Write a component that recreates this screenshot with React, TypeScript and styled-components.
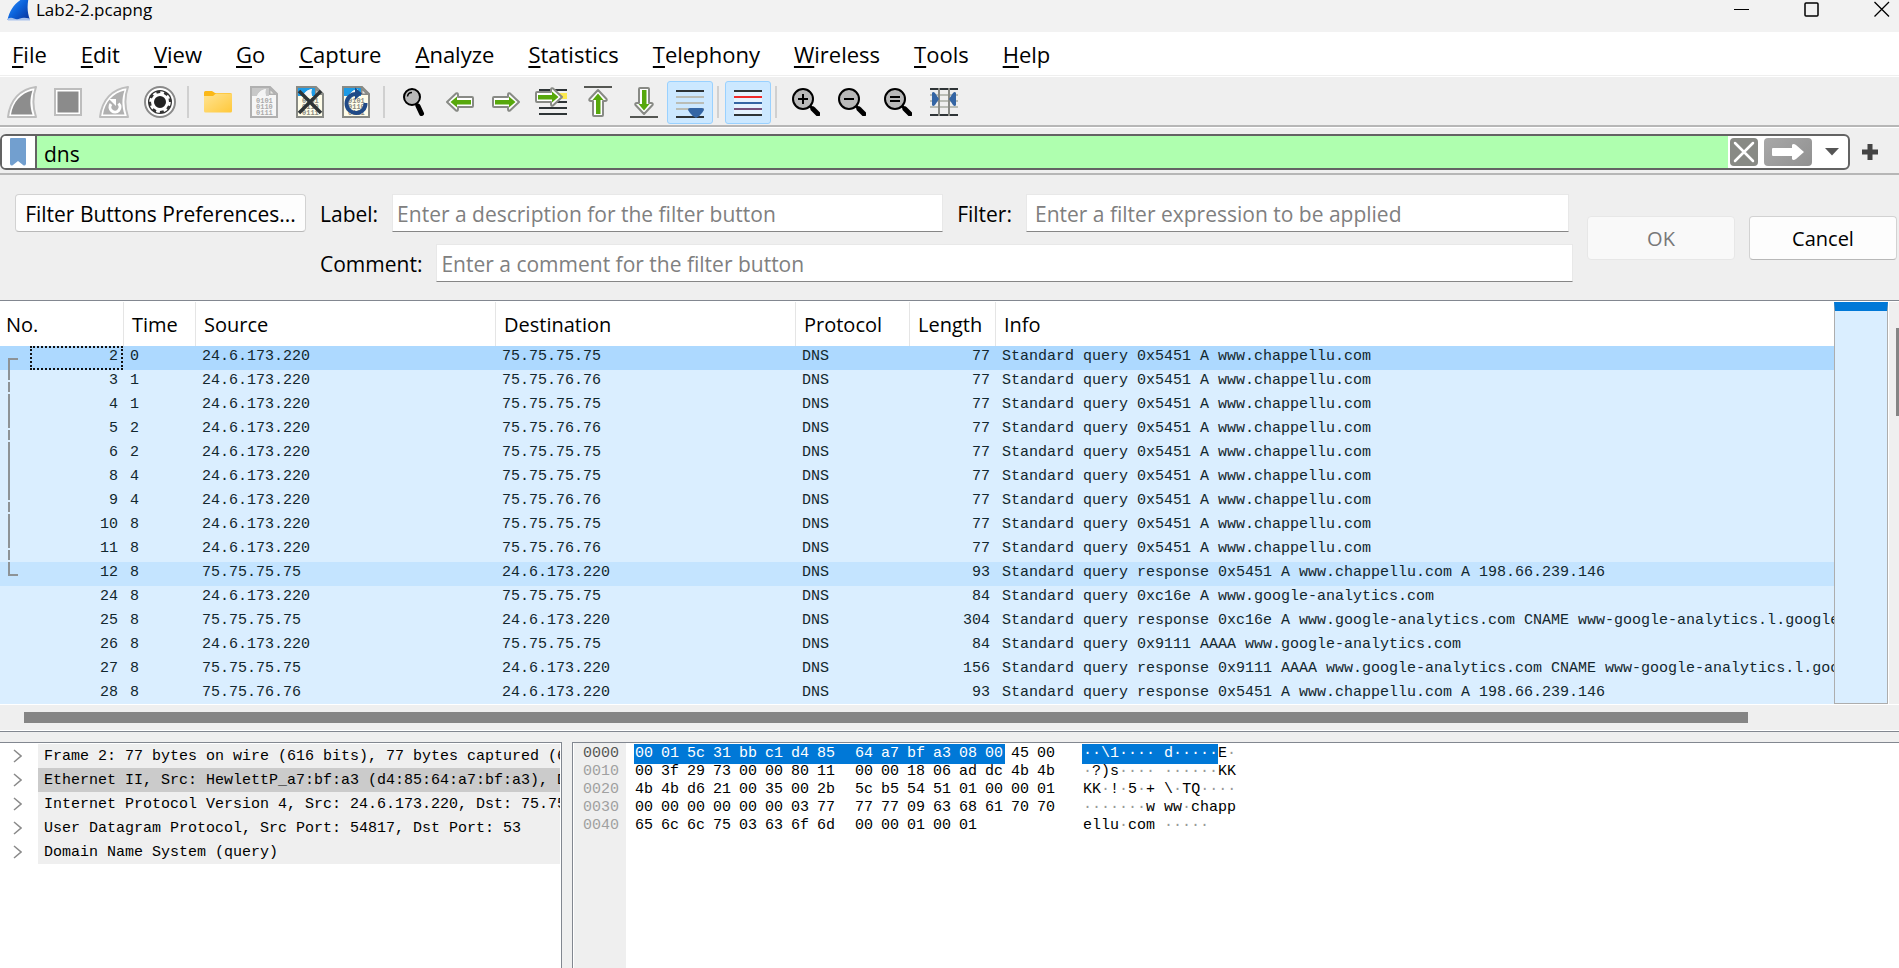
import React from 'react';
import styled, { createGlobalStyle, css } from 'styled-components';

const UI = '"Open Sans", "Noto Sans", sans-serif';
const MONO = '"Liberation Mono", "DejaVu Sans Mono", monospace';

const GlobalStyle = createGlobalStyle`
  * { box-sizing: border-box; }
  body { margin: 0; background: #efefef; font-family: ${UI}; color: #000; }
  button, input { font-family: inherit; margin: 0; }
  svg { display: block; }
`;

const Window = styled.div`
  display: flex;
  flex-direction: column;
  min-height: 100vh;
`;

/* ---------- title bar ---------- */

const TitleBar = styled.header`
  display: flex;
  align-items: flex-start;
  height: 32px;
  padding: 0 9px 0 7px;
  background: #f2f2f2;
`;

const Title = styled.h1`
  flex: 1;
  margin: 0 0 0 6px;
  font-size: 17px;
  font-weight: 400;
  line-height: 20px;
`;

const Controls = styled.div`
  display: flex;
  gap: 54px;
  padding-top: 1px;
`;

const ControlButton = styled.button`
  width: 16px;
  height: 17px;
  padding: 0;
  border: 0;
  background: none;
`;

/* ---------- menu ---------- */

const MenuBar = styled.nav`
  display: flex;
  gap: 34px;
  height: 43px;
  padding-left: 12px;
  align-items: center;
  background: #fff;
`;

const MenuItem = styled.button`
  padding: 0;
  border: 0;
  background: none;
  color: #000;
  font-size: 22px;
  line-height: 30px;

  &::first-letter {
    text-decoration: underline;
    text-decoration-thickness: 2px;
    text-underline-offset: 3px;
  }
`;

/* ---------- toolbar ---------- */

const Toolbar = styled.div`
  display: flex;
  align-items: center;
  height: 52px;
  padding-top: 3px;
  border-top: 1px solid #efefef;
  border-bottom: 2px solid #b6b6b6;
  box-shadow: inset 0 1px #fff;
  margin-left: -1px;
`;

const ToolButton = styled.button<{ $on?: boolean }>`
  display: flex;
  align-items: center;
  justify-content: center;
  width: 46px;
  height: 43px;
  padding: 0;
  border: 1px solid ${(p) => (p.$on ? '#99d1ff' : 'transparent')};
  border-radius: 3px;
  background: ${(p) => (p.$on ? '#cce8ff' : 'none')};
`;

const Separator = styled.i`
  width: 2px;
  height: 32px;
  margin: 0 6px 0 4px;
  background: #d0d0d0;
`;

/* ---------- display filter ---------- */

const FilterBar = styled.div`
  display: flex;
  align-items: center;
  gap: 12px;
  height: 48px;
  padding: 7px 21px 3px 0;
  border-bottom: 2px solid #b6b6b6;
  box-shadow: inset 0 1px #fff;
`;

const FilterBox = styled.div`
  display: flex;
  align-items: stretch;
  flex: 1;
  height: 36px;
  border: 2px solid #636363;
  border-radius: 6px;
  background: #fff;
  overflow: hidden;
`;

const BookmarkButton = styled.button`
  display: flex;
  align-items: center;
  justify-content: center;
  width: 35px;
  padding: 0 1px 0 0;
  border: 0;
  border-right: 2px solid #636363;
  background: #fff;
`;

const FilterInput = styled.input`
  flex: 1;
  min-width: 0;
  padding: 3px 8px 0 7px;
  border: 0;
  outline: 0;
  background: #afffaf;
  color: #000;
  font-size: 21px;
`;

const FilterActions = styled.div`
  display: flex;
  align-items: center;
  gap: 6px;
  padding: 0 2px;
`;

const FilterAction = styled.button<{ $width: number; $plain?: boolean }>`
  display: flex;
  align-items: center;
  justify-content: center;
  width: ${(p) => p.$width}px;
  height: 28px;
  padding: 0;
  border: 0;
  border-radius: 4px;
  background: ${(p) => (p.$plain ? 'none' : 'linear-gradient(135deg, #a8a8a8, #919191)')};

  &[data-kind='clear'] { background: #888a85; }
`;

const AddButton = styled.button`
  padding: 0;
  border: 0;
  background: none;
`;

/* ---------- filter button editor ---------- */

const Editor = styled.form`
  display: flex;
  gap: 14px;
  align-items: center;
  padding: 19px 2px 18px 15px;
`;

const PushButton = styled.button<{ $width: number; $tall?: boolean }>`
  width: ${(p) => p.$width}px;
  height: ${(p) => (p.$tall ? 44 : 38)}px;
  align-self: ${(p) => (p.$tall ? 'center' : 'flex-start')};
  padding: ${(p) => (p.$tall ? 0 : 2)}px 0 0;
  border: 1px solid #d2d2d2;
  border-bottom-color: #b8b8b8;
  border-radius: 4px;
  background: #fdfdfd;
  color: #000;
  font-size: ${(p) => (p.$tall ? 20 : 21)}px;
  white-space: nowrap;

  &:disabled {
    border-color: #e7e7e7;
    background: #f9f9f9;
    color: #787878;
  }
`;

const Fields = styled.div`
  display: flex;
  flex-direction: column;
  flex: 1;
  gap: 12px;
`;

const FieldRow = styled.div<{ $inset?: boolean }>`
  display: flex;
  align-items: center;
  gap: 14px;
  padding-right: ${(p) => (p.$inset ? 4 : 0)}px;
`;

const Label = styled.label`
  height: 38px;
  padding-top: 1px;
  font-size: 21px;
  line-height: 38px;
`;

const TextInput = styled.input<{ $indent?: boolean }>`
  flex: 1 1 ${(p) => (p.$indent ? 16 : 24)}px;
  min-width: 0;
  height: 38px;
  padding: 2px 5px 0 ${(p) => (p.$indent ? 8 : 4)}px;
  border: 1px solid #e8e8e8;
  border-bottom: 1px solid #868686;
  outline: 0;
  background: #fff;
  font-size: 21px;

  &::placeholder { color: #808080; opacity: 1; }
`;

/* ---------- packet list ---------- */

const PacketPane = styled.section`
  border-top: 1px solid #828790;
  border-bottom: 1px solid #828790;
  box-shadow: inset 0 1px #fff;
  padding-top: 1px;
`;

const PacketView = styled.div`
  display: flex;
  height: 402px;
`;

const TableClip = styled.div`
  flex: 1;
  min-width: 0;
  overflow: hidden;
  background: #fff;
`;

const PacketTable = styled.table`
  width: 100%;
  table-layout: fixed;
  border-collapse: separate;
  border-spacing: 0;
`;

const HeadCell = styled.th`
  height: 44px;
  padding: 2px 0 0 8px;
  border-right: 1px solid #e5e5e5;
  font-size: 20px;
  font-weight: 400;
  line-height: 26px;
  text-align: left;
  white-space: nowrap;

  &:first-child { padding-left: 6px; }
  &:last-child { border-right: 0; }
`;

type Tone = 'selected' | 'related' | 'plain';
const toneColor = { selected: '#add9ff', related: '#c4e4ff', plain: '#daeeff' };

const PacketRow = styled.tr<{ $tone: Tone }>`
  background: ${(p) => toneColor[p.$tone]};
`;

const Cell = styled.td<{ $right?: boolean }>`
  height: 24px;
  padding: 0 6px 2px 6px;
  overflow: hidden;
  color: #12272e;
  font-family: ${MONO};
  font-size: 15px;
  line-height: 22px;
  text-align: ${(p) => (p.$right ? 'right' : 'left')};
  white-space: pre;
`;

const NumberCell = styled(Cell)`
  padding: 0 1px 0 8px;
`;

const NumberInner = styled.div`
  display: flex;
  gap: 12px;
  height: 24px;
`;

const NumberBox = styled.span<{ $focus: boolean }>`
  flex: 1;
  padding-right: 3px;
  border: 2px ${(p) => (p.$focus ? 'dotted #111' : 'solid transparent')};
  line-height: 18px;
  text-align: right;
`;

const MiniMap = styled.div`
  width: 54px;
  border: 1px solid #adadad;
  border-top: 9px solid #0078d7;
  background: #daeeff;
`;

const VerticalTrack = styled.div`
  display: flex;
  justify-content: flex-end;
  width: 11px;
  padding-top: 26px;
  border-left: 1px solid #fff;
`;

const VerticalThumb = styled.div`
  width: 3px;
  height: 88px;
  background: #858585;
`;

const HorizontalTrack = styled.div`
  height: 27px;
  padding: 7px 151px 0 24px;
  border-top: 1px solid #fff;
  border-bottom: 1px solid #fff;
`;

const HorizontalThumb = styled.div`
  height: 11px;
  background: #858585;
`;

/* ---------- lower panes ---------- */

const Lower = styled.div`
  display: flex;
  flex: 1;
  gap: 10px;
  padding-top: 10px;
`;

const paneFrame = css`
  border-top: 1px solid #828790;
  background: #fff;
  overflow: hidden;
`;

const DetailPane = styled.section`
  ${paneFrame}
  flex: 0 0 562px;
  border-right: 1px solid #828790;
`;

const DetailList = styled.ul`
  margin: 1px 1px 0 0;
  padding: 0;
  list-style: none;
`;

const DetailItem = styled.li`
  display: flex;
  height: 24px;
`;

const Expander = styled.button`
  width: 38px;
  padding: 0 0 0 13px;
  border: 0;
  background: none;
`;

const DetailText = styled.span<{ $active?: boolean }>`
  flex: 1;
  min-width: 0;
  padding-left: 6px;
  overflow: hidden;
  background: ${(p) => (p.$active ? '#cbcbcb' : '#efefef')};
  font-family: ${MONO};
  font-size: 15px;
  line-height: 26px;
  white-space: pre;
`;

const BytesPane = styled.section`
  ${paneFrame}
  display: flex;
  flex: 1;
  border-left: 1px solid #828790;
  padding-left: 1px;
  font-family: ${MONO};
  font-size: 15px;
  line-height: 20px;
`;

const Offsets = styled.div`
  width: 52px;
  padding: 1px 0 0 9px;
  background: #efefef;
  color: #a0a0a0;
`;

const Offset = styled.div<{ $active: boolean }>`
  height: 18px;
  color: ${(p) => (p.$active ? '#555' : 'inherit')};
`;

const HexRows = styled.div`
  padding: 1px 0 0 8px;
`;

const HexRow = styled.div`
  display: flex;
  height: 18px;
`;

const ByteGroup = styled.div`
  display: flex;
  width: 208px;
  margin-right: 12px;
`;

const Byte = styled.span<{ $mark?: 'run' | 'gap' | 'end' }>`
  width: ${(p) => (p.$mark === 'gap' ? 38 : p.$mark === 'end' ? 21 : 26)}px;
  margin-right: ${(p) => (p.$mark === 'gap' ? -12 : p.$mark === 'end' ? 5 : 0)}px;
  height: 20px;
  flex: none;
  padding-left: 1px;
  ${(p) => p.$mark && 'background: #0078d7; color: #fff;'}
`;

const Ascii = styled.div`
  margin-left: 8px;
  white-space: pre;
`;

const AsciiMark = styled.span`
  display: inline-block;
  height: 20px;
  padding-left: 1px;
  background: #0078d7;
  color: #fff;
`;

const AsciiPlain = styled.span<{ $indent?: boolean }>`
  display: inline-block;
  padding-left: ${(p) => (p.$indent ? 1 : 0)}px;
`;

const Dot = styled.span`
  color: #999;
`;

/* ---------- icons ---------- */

const AppFin = () => (
  <svg width="23" height="22" viewBox="0 0 23 22">
    <defs>
      <linearGradient id="fin" x1="0" y1="0" x2="1" y2="1">
        <stop offset="0" stopColor="#3f9bff" />
        <stop offset="0.5" stopColor="#0b63dc" />
        <stop offset="1" stopColor="#0a2f96" />
      </linearGradient>
    </defs>
    <path d="M0.5 20 C3 9 9 0 22 -4 C20 5 20 12 23 20 Z" fill="url(#fin)" />
    <path d="M1 18.5 q3 -1.5 6 0 t6 0 t10 0 v2 h-22 z" fill="#a9c2ec" />
  </svg>
);

const FinShape = ({ light = false }: { light?: boolean }) => (
  <>
    <path d="M1 31 C3 14 13 3 29 1 C25 12 26 22 29 31 Z" fill="#fff" stroke="#bdbdbd" strokeWidth="2" strokeLinejoin="round" />
    <path d="M4 28.500 C6 16 14 7 25.500 4.500 C22.500 13 23 21 25.500 28.500 Z" fill={light ? '#b0b0b0' : '#8d8d8d'} />
  </>
);

const FinIcon = () => (
  <svg width="32" height="32" viewBox="-1 0 32 32"><FinShape /></svg>
);

const RestartIcon = () => (
  <svg width="32" height="32" viewBox="-1 0 32 32">
    <FinShape light />
    <path d="M12 18 A5 5 0 1 0 19.500 17.500" fill="none" stroke="#fff" strokeWidth="3" />
    <path d="M10 13 H17 V20 Z" fill="#fff" />
  </svg>
);

const StopIcon = () => (
  <svg width="28" height="28" viewBox="0 0 28 28">
    <rect x="1" y="1" width="26" height="26" fill="#fff" stroke="#bdbdbd" strokeWidth="2" />
    <rect x="3.500" y="3.500" width="21" height="21" fill="#8b8b8b" />
  </svg>
);

const GearIcon = () => (
  <svg width="32" height="32" viewBox="0 0 32 32">
    <circle cx="16" cy="16" r="15" fill="#fff" stroke="#8a8a8a" strokeWidth="2" />
    <circle cx="16" cy="16" r="12" fill="#333" />
    <circle cx="16" cy="16" r="7.500" fill="none" stroke="#fff" strokeWidth="3" />
    <circle cx="16" cy="16" r="9.500" fill="none" stroke="#fff" strokeWidth="2.500" strokeDasharray="3.700 3.760" />
    <circle cx="16" cy="16" r="5.500" fill="#222" />
  </svg>
);

const FolderIcon = () => (
  <svg width="28" height="24" viewBox="0 0 28 24">
    <defs>
      <linearGradient id="folder" x1="0" y1="0" x2="1" y2="1">
        <stop offset="0" stopColor="#ffe493" />
        <stop offset="1" stopColor="#ffc83a" />
      </linearGradient>
    </defs>
    <path d="M0 2.500 a1.500 1.500 0 0 1 1.500 -1.500 H8 L11 3 H26 a2 2 0 0 1 2 2 V10 H0 Z" fill="#fbb817" />
    <path d="M0 6 H9 L12 3.500 H27 a1 1 0 0 1 1 1 V21 a1.500 1.500 0 0 1 -1.500 1.500 H1.500 A1.500 1.500 0 0 1 0 21 Z" fill="url(#folder)" />
  </svg>
);

const DocIcon = ({ kind }: { kind: 'save' | 'close' | 'reload' }) => {
  const grey = kind === 'save';
  return (
    <svg width="28" height="32" viewBox="0 0 28 32">
      <path d="M1 1 H20 L27 8 V31 H1 Z" fill={grey ? '#f6f6f6' : '#fffde9'} stroke={grey ? '#b0b0b0' : '#888a85'} strokeWidth="2" />
      <path d="M2 2 H19 V10 H16 C15 7 15 5 16 3 C11 4 8 7 7 10 H2 Z" fill={grey ? '#c8c8c8' : '#1d9be6'} />
      <path d="M7 10 C8 7 11 4 16 3 C15 5 15 7 16 10 Z" fill="#f4f4f4" />
      <path d="M19 1 V9 H27 Z" fill={grey ? '#b0b0b0' : '#888a85'} />
      <path d="M20.500 4.500 V7.500 H23.500 Z" fill="#e8e8e4" />
      <g fill={grey ? '#aaa' : '#8a8a80'} fontFamily="Liberation Mono" fontSize="7" fontWeight="700">
        <text x="6" y="17">0101</text>
        <text x="6" y="23">0110</text>
        <text x="6" y="29">0111</text>
      </g>
      {kind === 'close' && <path d="M3 5 L25 27 M25 5 L3 27" stroke="#2e3436" strokeWidth="3.500" />}
      {kind === 'reload' && (
        <>
          <path d="M23.500 17 A9.500 9.500 0 1 1 14 8" fill="none" stroke="#204a87" strokeWidth="4" />
          <path d="M13 1.500 L20 7.500 L13 14 Z" fill="#204a87" />
        </>
      )}
    </svg>
  );
};

const FindIcon = () => (
  <svg width="28" height="28" viewBox="-1 0 28 28">
    <path d="M17 18 L20.500 25.500" stroke="#000" strokeWidth="5" strokeLinecap="round" />
    <path d="M14 14 L17 19" stroke="#000" strokeWidth="2.500" />
    <circle cx="11" cy="9" r="8" fill="#b9b9b9" stroke="#000" strokeWidth="2" />
    <path d="M6.500 8.500 A4.500 4.500 0 0 1 11 4.500" fill="none" stroke="#000" strokeWidth="1.500" />
  </svg>
);

const ArrowShape = () => (
  <>
    <path d="M1 10 L10 1.500 Q12 0.500 12 3 V5 H26 Q27 5 27 6 V14 Q27 15 26 15 H12 V17 Q12 19.500 10 18.500 Z" fill="#fff" stroke="#888a85" strokeWidth="2" strokeLinejoin="round" />
    <path d="M4.500 10 L11 4.500 V8 H25 V12.500 H11 V15.500 Z" fill="#57a80c" />
  </>
);

const BackIcon = () => <svg width="28" height="20" viewBox="0 0 28 20"><ArrowShape /></svg>;
const ForwardIcon = () => (
  <svg width="28" height="20" viewBox="0 0 28 20"><g transform="matrix(-1 0 0 1 28 0)"><ArrowShape /></g></svg>
);
const GoToIcon = () => (
  <svg width="34" height="30" viewBox="-2 0 34 30">
    <path d="M2 3 H30" stroke="#2e3436" strokeWidth="2" />
    <path d="M22 6 H30 V12 H22 Z" fill="#fce94f" />
    <path d="M2 15 H30 M2 21 H30 M2 27 H30" stroke="#2e3436" strokeWidth="2" />
    <g transform="matrix(-1 0 0 1 26 0)"><ArrowShape /></g>
  </svg>
);
const FirstIcon = () => (
  <svg width="28" height="32" viewBox="0 0 28 32">
    <path d="M0 1 H28" stroke="#555753" strokeWidth="2" />
    <g transform="matrix(0 1 1 0 4 3)"><ArrowShape /></g>
  </svg>
);
const LastIcon = () => (
  <svg width="28" height="32" viewBox="0 0 28 32">
    <path d="M0 31 H28" stroke="#555753" strokeWidth="2" />
    <g transform="matrix(0 -1 1 0 4 29)"><ArrowShape /></g>
  </svg>
);

const AutoScrollIcon = () => (
  <svg width="28" height="32" viewBox="0 0 28 32">
    <path d="M0 5 H28 M0 31 H28" stroke="#2e3436" strokeWidth="2" />
    <path d="M0 11 H28 M0 17 H28 M0 23 H28" stroke="#babdb6" strokeWidth="2" />
    <path d="M12 24 Q12 22 14 22 H26 Q28 22 28 24 L26 27 Q23 31 20 32 Q17 31 14 27 Z" fill="#3465a4" />
  </svg>
);

const ColorizeIcon = () => (
  <svg width="28" height="32" viewBox="0 0 28 32">
    <path d="M0 8 H28 M0 14 H28 M0 20 H28 M0 26 H28" stroke="#fff" strokeWidth="4" opacity="0.5" />
    <path d="M0 5 H28 M0 29 H28" stroke="#2e3436" strokeWidth="2" />
    <path d="M0 11 H28" stroke="#ef2929" strokeWidth="2" />
    <path d="M0 17 H28" stroke="#3465a4" strokeWidth="2" />
    <path d="M0 23 H28" stroke="#75507b" strokeWidth="2" />
  </svg>
);

const ZoomIcon = ({ sign }: { sign: 'plus' | 'minus' | 'equal' }) => (
  <svg width="28" height="28" viewBox="0 0 28 28">
    <path d="M21 21 L26 26" stroke="#000" strokeWidth="5" strokeLinecap="round" />
    <path d="M17 17 L22 22" stroke="#000" strokeWidth="3" />
    <circle cx="11" cy="11" r="10" fill="#b9b9b9" stroke="#000" strokeWidth="2" />
    {sign === 'plus' && <path d="M6 11 H16 M11 6 V16" stroke="#000" strokeWidth="2" />}
    {sign === 'minus' && <path d="M6 11 H16" stroke="#000" strokeWidth="2" />}
    {sign === 'equal' && <path d="M6 9 H16 M6 13 H16" stroke="#000" strokeWidth="2" />}
  </svg>
);

const ResizeIcon = () => (
  <svg width="28" height="28" viewBox="0 0 28 28">
    <path d="M0 1 H28 M0 27 H28" stroke="#2e3436" strokeWidth="2" />
    <path d="M0 7 H28 M0 13 H28 M0 19 H28" stroke="#babdb6" strokeWidth="2" />
    <path d="M9 0 V28 M19 0 V28" stroke="#888a85" strokeWidth="2" />
    <path d="M2 5 Q3 3 5 5 L9 11 L5 17 Q3 19 2 17 Z M26 5 Q25 3 23 5 L19 11 L23 17 Q25 19 26 17 Z" fill="#3465a4" />
  </svg>
);

/* ---------- data ---------- */

const MENU = ['File', 'Edit', 'View', 'Go', 'Capture', 'Analyze', 'Statistics', 'Telephony', 'Wireless', 'Tools', 'Help'];

type Tool = { name: string; icon: React.ReactNode; on?: boolean };
const TOOL_GROUPS: Tool[][] = [
  [
    { name: 'Start capture', icon: <FinIcon /> },
    { name: 'Stop capture', icon: <StopIcon /> },
    { name: 'Restart capture', icon: <RestartIcon /> },
    { name: 'Capture options', icon: <GearIcon /> },
  ],
  [
    { name: 'Open', icon: <FolderIcon /> },
    { name: 'Save', icon: <DocIcon kind="save" /> },
    { name: 'Close file', icon: <DocIcon kind="close" /> },
    { name: 'Reload', icon: <DocIcon kind="reload" /> },
  ],
  [
    { name: 'Find packet', icon: <FindIcon /> },
    { name: 'Previous packet', icon: <BackIcon /> },
    { name: 'Next packet', icon: <ForwardIcon /> },
    { name: 'Go to packet', icon: <GoToIcon /> },
    { name: 'First packet', icon: <FirstIcon /> },
    { name: 'Last packet', icon: <LastIcon /> },
    { name: 'Auto scroll', icon: <AutoScrollIcon />, on: true },
  ],
  [{ name: 'Colorize', icon: <ColorizeIcon />, on: true }],
  [
    { name: 'Zoom in', icon: <ZoomIcon sign="plus" /> },
    { name: 'Zoom out', icon: <ZoomIcon sign="minus" /> },
    { name: 'Normal size', icon: <ZoomIcon sign="equal" /> },
    { name: 'Resize columns', icon: <ResizeIcon /> },
  ],
];

const COLUMNS: [string, number | undefined][] = [
  ['No.', 124], ['Time', 72], ['Source', 300], ['Destination', 300], ['Protocol', 114], ['Length', 86], ['Info', undefined],
];

const A = '24.6.173.220';
const B = '75.75.75.75';
const C = '75.75.76.76';
const QUERY = 'Standard query 0x5451 A www.chappellu.com';
const ANSWER = 'Standard query response 0x5451 A www.chappellu.com A 198.66.239.146';

type Link = 'start' | 'full' | 'split' | 'end' | '';
type Packet = [number, number, string, string, number, string, Link];
const PACKETS: Packet[] = [
  [2, 0, A, B, 77, QUERY, 'start'],
  [3, 1, A, C, 77, QUERY, 'split'],
  [4, 1, A, B, 77, QUERY, 'full'],
  [5, 2, A, C, 77, QUERY, 'split'],
  [6, 2, A, B, 77, QUERY, 'full'],
  [8, 4, A, B, 77, QUERY, 'full'],
  [9, 4, A, C, 77, QUERY, 'split'],
  [10, 8, A, B, 77, QUERY, 'full'],
  [11, 8, A, C, 77, QUERY, 'split'],
  [12, 8, B, A, 93, ANSWER, 'end'],
  [24, 8, A, B, 84, 'Standard query 0xc16e A www.google-analytics.com', ''],
  [25, 8, B, A, 304, 'Standard query response 0xc16e A www.google-analytics.com CNAME www-google-analytics.l.google.c', ''],
  [26, 8, A, B, 84, 'Standard query 0x9111 AAAA www.google-analytics.com', ''],
  [27, 8, B, A, 156, 'Standard query response 0x9111 AAAA www.google-analytics.com CNAME www-google-analytics.l.googl', ''],
  [28, 8, C, A, 93, ANSWER, ''],
];

const LINK_PATHS: Record<Link, string> = {
  start: 'M10 13 H1 V24',
  full: 'M1 0 V24',
  split: 'M1 0 V10 M1 12 V22',
  end: 'M1 0 V13 H10',
  '': '',
};

const DETAILS = [
  'Frame 2: 77 bytes on wire (616 bits), 77 bytes captured (61',
  'Ethernet II, Src: HewlettP_a7:bf:a3 (d4:85:64:a7:bf:a3), Ds',
  'Internet Protocol Version 4, Src: 24.6.173.220, Dst: 75.75.',
  'User Datagram Protocol, Src Port: 54817, Dst Port: 53',
  'Domain Name System (query)',
];

const DUMP: [string, string, string][] = [
  ['0000', '00 01 5c 31 bb c1 d4 85 64 a7 bf a3 08 00 45 00', '··\\1···· d·····E·'],
  ['0010', '00 3f 29 73 00 00 80 11 00 00 18 06 ad dc 4b 4b', '·?)s···· ······KK'],
  ['0020', '4b 4b d6 21 00 35 00 2b 5c b5 54 51 01 00 00 01', 'KK·!·5·+ \\·TQ····'],
  ['0030', '00 00 00 00 00 00 03 77 77 77 09 63 68 61 70 70', '·······w ww·chapp'],
  ['0040', '65 6c 6c 75 03 63 6f 6d 00 00 01 00 01', 'ellu·com ·····'],
];
const MARKED = 14;

const markOf = (row: number, i: number) => {
  if (row !== 0 || i >= MARKED) return undefined;
  if (i === MARKED - 1) return 'end';
  return i === 7 ? 'gap' : 'run';
};

const dotted = (text: string) =>
  text.split(/(·+)/).map((part, i) => (part.startsWith('·') ? <Dot key={i}>{part}</Dot> : part));

export default function App() {
  return (
    <Window>
      <GlobalStyle />
      <TitleBar>
        <AppFin />
        <Title>Lab2-2.pcapng</Title>
        <Controls>
          <ControlButton aria-label="Minimize">
            <svg width="16" height="17"><path d="M0 8.500 H15" stroke="#000" /></svg>
          </ControlButton>
          <ControlButton aria-label="Maximize">
            <svg width="16" height="17"><rect x="1" y="2" width="13" height="13" rx="1" fill="none" stroke="#000" strokeWidth="1.500" /></svg>
          </ControlButton>
          <ControlButton aria-label="Close">
            <svg width="16" height="17"><path d="M0.500 1 L15 15.500 M15 1 L0.500 15.500" stroke="#000" strokeWidth="1.300" /></svg>
          </ControlButton>
        </Controls>
      </TitleBar>

      <MenuBar>
        {MENU.map((m) => <MenuItem key={m}>{m}</MenuItem>)}
      </MenuBar>

      <Toolbar>
        {TOOL_GROUPS.map((group, g) => (
          <React.Fragment key={g}>
            {g > 0 && <Separator />}
            {group.map((t) => (
              <ToolButton key={t.name} aria-label={t.name} $on={t.on}>{t.icon}</ToolButton>
            ))}
          </React.Fragment>
        ))}
      </Toolbar>

      <FilterBar>
        <FilterBox>
          <BookmarkButton aria-label="Bookmarks">
            <svg width="16" height="28" viewBox="0 0 16 28"><path d="M0 1 Q0 0 1 0 H15 Q16 0 16 1 V26 Q15 28.500 13 27 L8 23 L3 27 Q1 28.500 0 26 Z" fill="#729fcf" /></svg>
          </BookmarkButton>
          <FilterInput aria-label="Display filter" defaultValue="dns" />
          <FilterActions>
            <FilterAction $width={28} data-kind="clear" aria-label="Clear filter">
              <svg width="28" height="28"><path d="M5 5 L23 23 M23 5 L5 23" stroke="#fff" strokeWidth="2.500" strokeLinecap="round" /></svg>
            </FilterAction>
            <FilterAction $width={48} aria-label="Apply filter">
              <svg width="48" height="28"><path d="M9 10 H28 V7 Q29 5 32 7 L40 14 L32 21 Q29 23 28 21 V18 H9 Q8 18 8 17 V11 Q8 10 9 10 Z" fill="#fff" /></svg>
            </FilterAction>
            <FilterAction $width={28} $plain aria-label="Recent filters">
              <svg width="14" height="8"><path d="M0 0 H14 L7 7.500 Z" fill="#555" /></svg>
            </FilterAction>
          </FilterActions>
        </FilterBox>
        <AddButton aria-label="Add filter button">
          <svg width="16" height="16"><path d="M8 0 V16 M0 8 H16" stroke="#444" strokeWidth="5" /></svg>
        </AddButton>
      </FilterBar>

      <Editor onSubmit={(e) => e.preventDefault()}>
        <PushButton type="button" $width={291}>Filter Buttons Preferences...</PushButton>
        <Fields>
          <FieldRow $inset>
            <Label htmlFor="label">Label:</Label>
            <TextInput id="label" placeholder="Enter a description for the filter button" />
            <Label htmlFor="filter">Filter:</Label>
            <TextInput id="filter" $indent placeholder="Enter a filter expression to be applied" />
          </FieldRow>
          <FieldRow>
            <Label htmlFor="comment">Comment:</Label>
            <TextInput id="comment" placeholder="Enter a comment for the filter button" />
          </FieldRow>
        </Fields>
        <PushButton $width={148} $tall disabled>OK</PushButton>
        <PushButton type="button" $width={148} $tall>Cancel</PushButton>
      </Editor>

      <PacketPane>
        <PacketView>
          <TableClip>
            <PacketTable>
              <colgroup>
                {COLUMNS.map(([name, width]) => <col key={name} width={width} />)}
              </colgroup>
              <thead>
                <tr>{COLUMNS.map(([name]) => <HeadCell key={name} scope="col">{name}</HeadCell>)}</tr>
              </thead>
              <tbody>
                {PACKETS.map(([no, time, src, dst, len, info, link]) => (
                  <PacketRow key={no} $tone={no === 2 ? 'selected' : no === 12 ? 'related' : 'plain'}>
                    <NumberCell>
                      <NumberInner>
                        <svg width="10" height="24"><path d={LINK_PATHS[link]} fill="none" stroke="#8d9397" strokeWidth="2" /></svg>
                        <NumberBox $focus={no === 2}>{no}</NumberBox>
                      </NumberInner>
                    </NumberCell>
                    <Cell>{time}</Cell>
                    <Cell>{src}</Cell>
                    <Cell>{dst}</Cell>
                    <Cell>DNS</Cell>
                    <Cell $right>{len}</Cell>
                    <Cell>{info}</Cell>
                  </PacketRow>
                ))}
              </tbody>
            </PacketTable>
          </TableClip>
          <MiniMap />
          <VerticalTrack><VerticalThumb /></VerticalTrack>
        </PacketView>
        <HorizontalTrack><HorizontalThumb /></HorizontalTrack>
      </PacketPane>

      <Lower>
        <DetailPane>
          <DetailList>
            {DETAILS.map((line, i) => (
              <DetailItem key={line}>
                <Expander aria-label="Expand">
                  <svg width="9" height="14"><path d="M1 1 L8 7 L1 13" fill="none" stroke="#8a8a8a" strokeWidth="1.500" /></svg>
                </Expander>
                <DetailText $active={i === 1}>{line}</DetailText>
              </DetailItem>
            ))}
          </DetailList>
        </DetailPane>
        <BytesPane>
          <Offsets>
            {DUMP.map(([offset], i) => <Offset key={offset} $active={i === 0}>{offset}</Offset>)}
          </Offsets>
          <HexRows>
            {DUMP.map(([offset, hex, ascii], row) => {
              const bytes = hex.split(' ');
              return (
                <HexRow key={offset}>
                  {[0, 8].map((from) => (
                    <ByteGroup key={from}>
                      {bytes.slice(from, from + 8).map((b, i) => (
                        <Byte key={i} $mark={markOf(row, from + i)}>{b}</Byte>
                      ))}
                    </ByteGroup>
                  ))}
                  <Ascii>
                    {row === 0 ? (
                      <>
                        <AsciiMark>{ascii.slice(0, MARKED + 1)}</AsciiMark>
                        <AsciiPlain>{dotted(ascii.slice(MARKED + 1))}</AsciiPlain>
                      </>
                    ) : (
                      <AsciiPlain $indent>{dotted(ascii)}</AsciiPlain>
                    )}
                  </Ascii>
                </HexRow>
              );
            })}
          </HexRows>
        </BytesPane>
      </Lower>
    </Window>
  );
}
